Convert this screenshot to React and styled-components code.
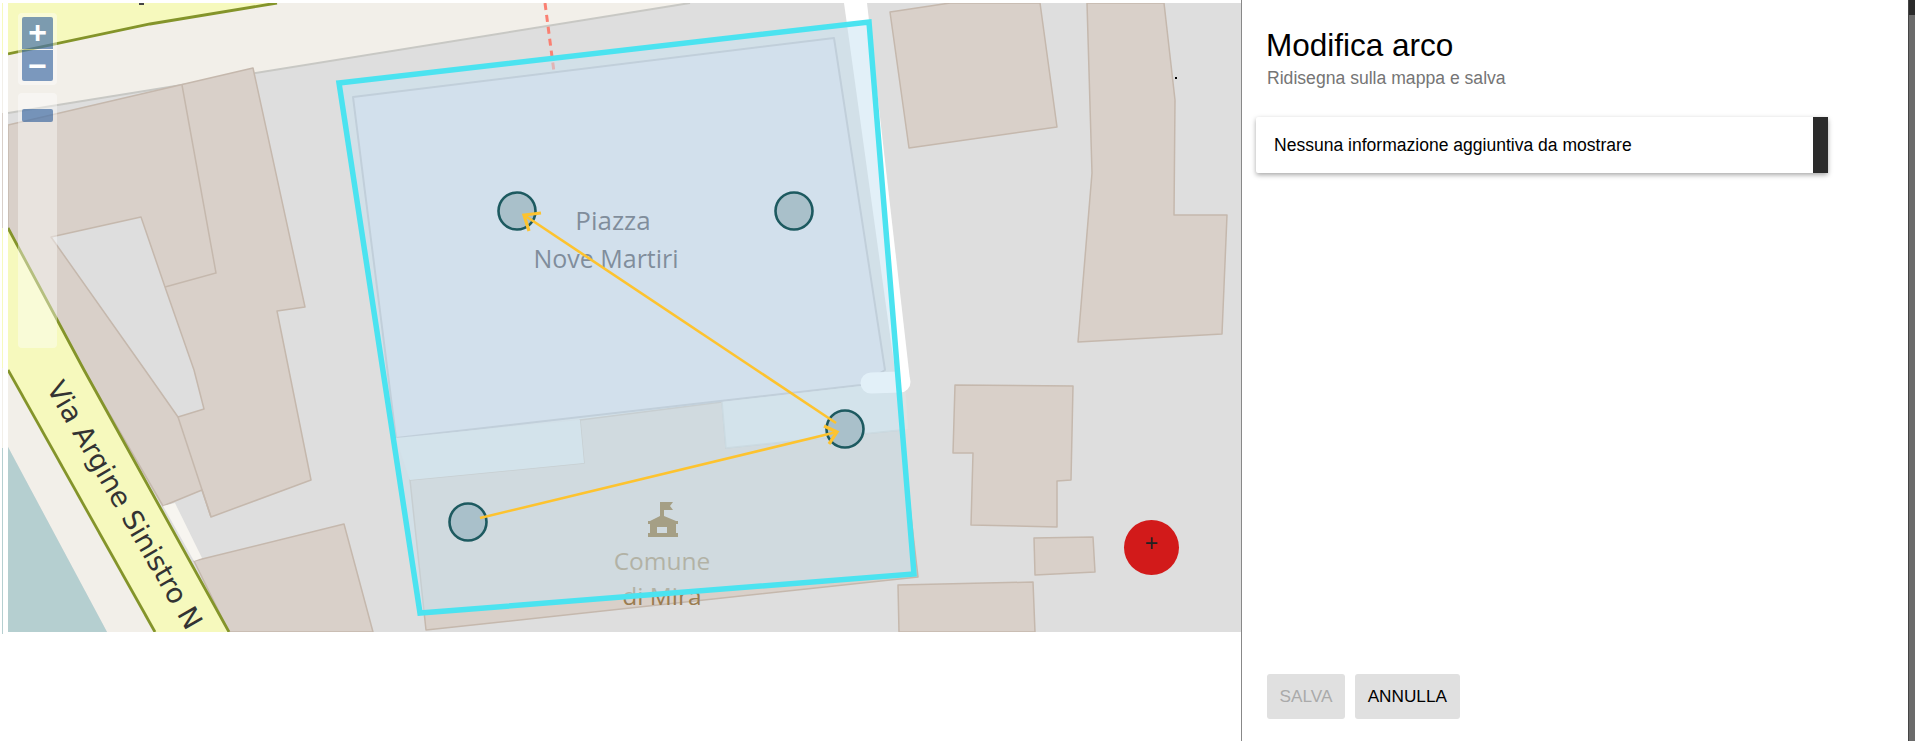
import React from "react";
import styled, { createGlobalStyle } from "styled-components";

const GlobalStyle = createGlobalStyle`
  html, body {
    margin: 0;
    padding: 0;
    background: #fff;
    overflow: hidden;
    font-family: "Liberation Sans", Arial, sans-serif;
  }
`;

const Page = styled.div`
  display: flex;
  width: 1915px;
  height: 741px;
  overflow: hidden;
`;

const EdgeStrip = styled.div`
  flex: none;
  width: 1px;
  height: 631px;
  margin: 3px 5px 0 2px;
  background: linear-gradient(
    #f6f9bd 0 51px,
    #f2efe9 51px 110px,
    #d9d0c9 110px 225px,
    #f6f9bd 225px 365px,
    #f2efe9 365px 445px,
    #b5cfd0 445px
  );
`;

const MapColumn = styled.div`
  flex: none;
  width: 1233px;
  padding-top: 3px;
`;

const MapArea = styled.div`
  position: relative;
  width: 1233px;
  height: 629px;
  overflow: hidden;
  background: #dedede;
`;

const MapSvg = styled.svg`
  display: block;
  width: 1233px;
  height: 629px;
`;

const MapLabel = styled.text`
  font-family: "Open Sans", "Noto Sans", sans-serif;
  font-size: ${(p) => p.$size || 25}px;
  text-anchor: middle;
  fill: ${(p) => p.$color};
`;

const RoadLabel = styled.text`
  font-family: "DejaVu Sans", sans-serif;
  font-size: 27.5px;
  fill: #333;
`;

const ZoomBox = styled.div`
  position: absolute;
  left: 10px;
  top: 10px;
  display: flex;
  flex-direction: column;
  gap: 1px;
  padding: 4px;
  border-radius: 4px;
  background: rgba(255, 255, 255, 0.4);
`;

const ZoomButton = styled.button`
  display: flex;
  align-items: center;
  justify-content: center;
  width: 31px;
  height: 31.5px;
  padding: ${(p) => (p.$top ? "0 0 2px" : "2px 0 0")};
  border: 0;
  border-radius: ${(p) => (p.$top ? "2px 2px 0 0" : "0 0 2px 2px")};
  background: rgba(0, 60, 136, 0.5);
  color: #fff;
  font-family: "Liberation Sans", Arial, sans-serif;
  font-size: 32px;
  font-weight: 700;
  line-height: 1;
`;

const ZoomSlider = styled.div`
  position: absolute;
  left: 10px;
  top: 90px;
  width: 31px;
  height: 239px;
  padding: 16px 4px 0;
  border-radius: 4px;
  background: rgba(255, 255, 255, 0.4);
`;

const SliderThumb = styled.div`
  width: 31px;
  height: 13px;
  border-radius: 2px;
  background: rgba(0, 60, 136, 0.5);
`;

const AddButton = styled.button`
  position: absolute;
  left: 1116px;
  top: 517px;
  width: 55px;
  height: 55px;
  padding: 0 0 8px;
  border: 0;
  border-radius: 50%;
  background: #d21a1a;
  color: #222;
  font-family: "Liberation Sans", Arial, sans-serif;
  font-size: 23px;
  line-height: 1;
`;

const Panel = styled.section`
  flex: 1;
  display: flex;
  flex-direction: column;
  justify-content: space-between;
  padding: 28px 0 22px 14px;
  border-left: 1px solid #888;
`;

const Header = styled.header`
  margin-left: 10px;
`;

const Title = styled.h1`
  margin: 0;
  font-size: 31.5px;
  font-weight: 400;
  line-height: 34px;
  color: #000;
`;

const Subtitle = styled.p`
  margin: 6px 0 0 1px;
  font-size: 17.6px;
  line-height: 20px;
  color: #757575;
`;

const InfoCard = styled.div`
  display: flex;
  align-items: center;
  justify-content: space-between;
  width: 572px;
  height: 56px;
  margin-top: 29px;
  border-radius: 2px;
  background: #fff;
  box-shadow: 0 2px 5px rgba(0, 0, 0, 0.35);
`;

const InfoText = styled.span`
  padding-left: 18px;
  font-size: 17.55px;
  color: #000;
`;

const InfoStripe = styled.div`
  width: 15px;
  height: 100%;
  background: #2b2b2b;
`;

const Actions = styled.div`
  display: flex;
  gap: 10px;
  margin-left: 11px;
`;

const ActionButton = styled.button`
  height: 45px;
  padding: 0 12.6px;
  border: 0;
  border-radius: 3px;
  background: #e0e0e0;
  color: ${(p) => (p.disabled ? "#aaa" : "#000")};
  font-family: "Liberation Sans", Arial, sans-serif;
  font-size: 17.2px;
`;

const Scrollbar = styled.div`
  flex: none;
  width: 6px;
  border-left: 1px solid #444;
  background: linear-gradient(#2b2b2b 0 15px, #6b6b6b 15px);
`;

const Poly = ({ d, fill = "#d9d0c9", stroke = "#c5b8ad", w = 1.5 }) => (
  <polygon points={d} fill={fill} stroke={stroke} strokeWidth={w} strokeLinejoin="round" />
);

const buildings = [
  "8,125 253,68 305,307 277,311 311,480 211,517 202,490 163,506 84,370 8,228",
  "194,561 344,524 373,632 229,632",
  "410,480 584,463 580,420 722,402 726,448 901,430 918,577 426,630",
  "890,12 950,3 1040,3 1057,127 909,148",
  "1087,3 1164,3 1175,100 1174,215 1227,215 1222,334 1078,342 1092,173",
  "955,385 1073,386 1071,480 1057,481 1057,527 971,525 973,453 953,453",
  "1034,538 1093,537 1095,572 1035,575",
  "898,585 1033,582 1035,632 899,632",
];

const Marker = ({ cx, cy }) => (
  <circle cx={cx} cy={cy} r="18.5" fill="#a9c0ca" stroke="#1d5a60" strokeWidth="2.6" />
);

const Arrow = ({ line, head }) => (
  <g fill="none" stroke="#fdc32f" strokeWidth="2.6">
    <polyline points={line} />
    <polyline points={head} strokeWidth="3.2" />
  </g>
);

const MapDrawing = () => (
  <MapSvg viewBox="8 3 1233 629">
    <rect x="8" y="3" width="1233" height="629" fill="#dedede" />

    {/* top road */}
    <Poly d="8,3 277,3 150,24 8,54" fill="#f6f9bd" stroke="none" />
    <Poly d="8,54 150,24 277,3 690,3 8,113" fill="#f2efe9" stroke="none" />
    <polyline points="8,54 150,24 277,3" fill="none" stroke="#84942a" strokeWidth="2.8" />
    <line x1="8" y1="113" x2="690" y2="3" stroke="#c8c8c4" strokeWidth="2" />
    <rect x="139" y="3" width="5" height="2" fill="#444" />

    {buildings.map((d) => (
      <Poly key={d} d={d} />
    ))}

    {/* courtyard between the left buildings */}
    <Poly d="51,237 141,217 165,287 194,370 204,409 178,417 145,370" fill="#dedede" stroke="#c5b8ad" />
    <polyline points="182,85 216,273 165,287" fill="none" stroke="#c5b8ad" strokeWidth="1.5" />
    <line x1="178" y1="417" x2="211" y2="517" stroke="#c5b8ad" strokeWidth="1.5" />

    {/* via argine */}
    <Poly d="8,370 155,632 107,632 8,447" fill="#f2efe9" stroke="none" />
    <Poly d="8,447 107,632 8,632" fill="#b5cfd0" stroke="none" />
    <Poly d="163,506 175,503 202,558 194,561" fill="#f7f5f0" stroke="none" />
    <Poly d="8,228 84,370 229,632 155,632 8,370" fill="#f6f9bd" stroke="none" />
    <polyline points="8,228 84,370 229,632" fill="none" stroke="#84942a" strokeWidth="2.8" />
    <polyline points="8,370 155,632" fill="none" stroke="#84942a" strokeWidth="2.8" />
    <RoadLabel transform="translate(46 388) rotate(60)">Via Argine Sinistro N</RoadLabel>

    {/* square and white path */}
    <Poly d="353,97 834,38 885,370 861,385 396,438" fill="#dddde6" stroke="#b9b9c0" w={2} />
    <Poly d="844,3 867,3 910,380 897,385" fill="#fff" stroke="none" />
    <Poly d="396,438 580,420 584,463 410,480" fill="#dfe3e3" stroke="none" />
    <Poly d="722,402 905,381 908,429 726,448" fill="#dfe3e3" stroke="none" />
    <line x1="722" y1="402" x2="726" y2="448" stroke="#cfd2d0" strokeWidth="1.5" />
    <line x1="726" y1="448" x2="901" y2="430" stroke="#cfd2d0" strokeWidth="1.5" />
    <line x1="871" y1="383" x2="900" y2="382" stroke="#fff" strokeWidth="21" strokeLinecap="round" />
    <polyline
      points="545,3 554,72"
      fill="none"
      stroke="#fa8072"
      strokeWidth="3"
      strokeDasharray="7 5"
    />

    <MapLabel x="613" y="230" $size={26} $color="#2f2d3a">Piazza</MapLabel>
    <MapLabel x="606" y="268" $color="#2f2d3a">Nove Martiri</MapLabel>
    <MapLabel x="662" y="570" $size={24.5} $color="#9a7c50">Comune</MapLabel>
    <MapLabel x="662" y="605" $size={24.5} $color="#9a7c50">di Mira</MapLabel>

    {/* town hall icon */}
    <path
      d="M660 502h13l-3 4 3 4h-9v6l12 5h2v3h-2v9h2v4h-30v-4h2v-9h-2v-3h2l10-5zM657 527v6h10v-6z"
      fill="#7d530b"
      fillRule="evenodd"
    />

    {/* edited area */}
    <polygon
      points="339,83 869,22 914,574 420,613"
      fill="rgba(200,226,241,0.53)"
      stroke="#4be3f0"
      strokeWidth="5.5"
    />

    <Marker cx={517} cy={211} />
    <Marker cx={794} cy={211} />
    <Marker cx={845} cy={429} />
    <Marker cx={468} cy={522} />

    <Arrow line="836,423 524,215" head="541,213 524,215 529,231" />
    <Arrow line="480,518 837,432" head="824,426 837,432 829,444" />

    <rect x="1175" y="77" width="2" height="2" fill="#000" />
  </MapSvg>
);

export default function App() {
  return (
    <Page>
      <GlobalStyle />
      <EdgeStrip />
      <MapColumn>
        <MapArea>
          <MapDrawing />
          <ZoomBox>
            <ZoomButton $top>+</ZoomButton>
            <ZoomButton>−</ZoomButton>
          </ZoomBox>
          <ZoomSlider>
            <SliderThumb />
          </ZoomSlider>
          <AddButton>+</AddButton>
        </MapArea>
      </MapColumn>
      <Panel>
        <div>
          <Header>
            <Title>Modifica arco</Title>
            <Subtitle>Ridisegna sulla mappa e salva</Subtitle>
          </Header>
          <InfoCard>
            <InfoText>Nessuna informazione aggiuntiva da mostrare</InfoText>
            <InfoStripe />
          </InfoCard>
        </div>
        <Actions>
          <ActionButton disabled>SALVA</ActionButton>
          <ActionButton>ANNULLA</ActionButton>
        </Actions>
      </Panel>
      <Scrollbar />
    </Page>
  );
}
